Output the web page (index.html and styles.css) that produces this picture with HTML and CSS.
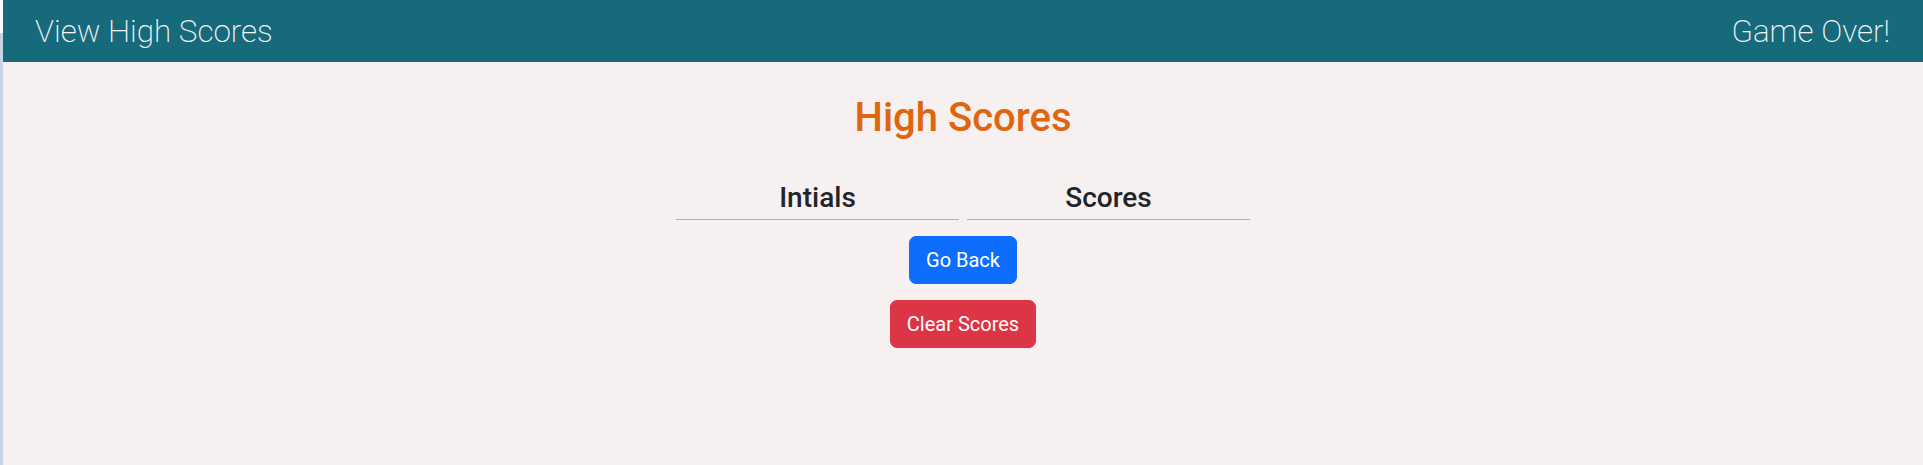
FILE: index.html
```html
<!DOCTYPE html>
<html lang="en">
<head>
<meta charset="utf-8">
<title>High Scores</title>
<link rel="stylesheet" href="styles.css">
</head>
<body>
<div class="page">
  <header class="topbar">
    <span class="topbar-link">View High Scores</span>
    <span class="topbar-status">Game Over!</span>
  </header>
  <main class="content">
    <h1 class="title">High Scores</h1>
    <div class="score-table">
      <div class="score-head">Intials</div>
      <div class="score-head">Scores</div>
    </div>
    <div class="actions">
      <button class="btn btn-primary">Go Back</button>
      <button class="btn btn-danger">Clear Scores</button>
    </div>
  </main>
</div>
</body>
</html>
```

FILE: styles.css
```css
html, body {
  margin: 0;
  height: 100%;
}

body {
  padding-left: 3px;
  box-sizing: border-box;
  background: linear-gradient(to bottom, #ffffff 33px, #c9d3e6 33px);
  font-family: Roboto, "Liberation Sans", sans-serif;
  color: #212529;
}

.page {
  min-height: 100%;
  background: #f6f0f0;
  display: flex;
  flex-direction: column;
}

.topbar {
  height: 62px;
  background: #176a7b;
  display: flex;
  align-items: center;
  justify-content: space-between;
  padding: 0 33px 0 32px;
  color: #f4f6f7;
  font-size: 31.4px;
  font-weight: 200;
}

.content {
  display: flex;
  flex-direction: column;
  align-items: center;
}

.title {
  margin: 32px 0 0;
  font-size: 40px;
  font-weight: 500;
  line-height: 1.2;
  color: #e0650f;
}

.score-table {
  margin-top: 35px;
  width: 574px;
  display: flex;
  gap: 8px;
}

.score-head {
  flex: 1;
  text-align: center;
  font-size: 28px;
  font-weight: 500;
  line-height: 42px;
  border-bottom: 1px solid #f5a631;
}

.actions {
  margin-top: 16px;
  display: flex;
  flex-direction: column;
  align-items: center;
  gap: 16px;
}

.btn {
  font-family: Roboto, "Liberation Sans", sans-serif;
  font-size: 20px;
  font-weight: 400;
  line-height: 30px;
  padding: 8px 16px;
  border: 1px solid transparent;
  border-radius: 7px;
  color: #ffffff;
  cursor: pointer;
}

.btn-primary {
  background: #0d6efd;
  border-color: #0d6efd;
}

.btn-danger {
  background: #dc3545;
  border-color: #dc3545;
}
```
